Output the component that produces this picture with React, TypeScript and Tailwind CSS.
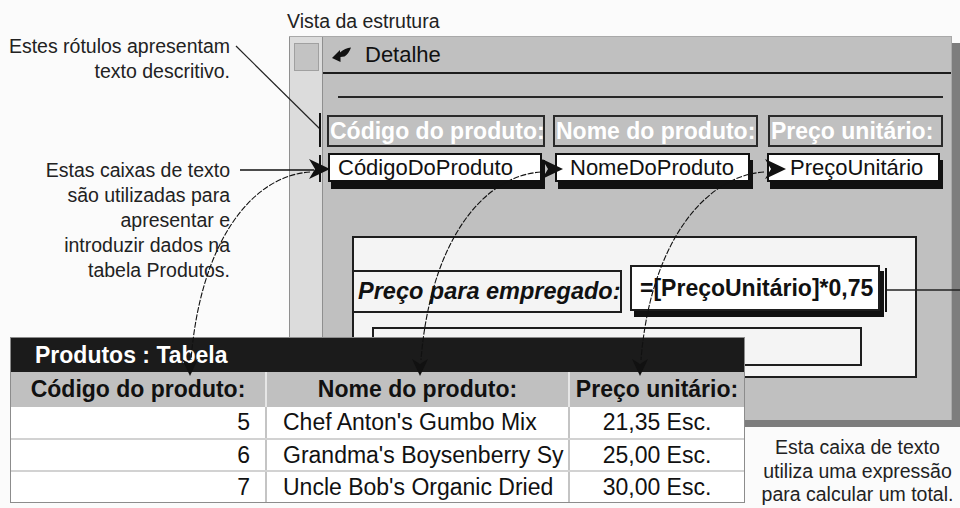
import React from "react";

function ArrowR({ x, y }: { x: number; y: number }) {
  return (
    <polygon
      points={`${x},${y} ${x - 21},${y - 10} ${x - 15},${y} ${x - 21},${y + 10}`}
      fill="#111"
    />
  );
}

function ArrowD({ x, y }: { x: number; y: number }) {
  return (
    <polygon
      points={`${x},${y} ${x - 8},${y - 17} ${x},${y - 12} ${x + 8},${y - 17}`}
      fill="#111"
    />
  );
}

const rows: [string, string, string][] = [
  ["5", "Chef Anton's Gumbo Mix", "21,35 Esc."],
  ["6", "Grandma's Boysenberry Sy", "25,00 Esc."],
  ["7", "Uncle Bob's Organic Dried", "30,00 Esc."],
];

export default function App() {
  return (
    <div className="relative w-[960px] h-[508px] overflow-hidden bg-[#fbfbfb] text-[#1a1a1a] font-['Liberation_Sans',Arial,sans-serif]">
      {/* caption */}
      <div className="ml-[287px] pt-[9px] h-[36px] text-[19.5px] leading-[25px] text-[#222]">
        Vista da estrutura
      </div>

      {/* design window */}
      <div className="ml-[289px] w-[663px] h-[384px] flex border-t border-r border-[#a9a9a9] shadow-[8px_7px_0_#7d7d7d]">
        <div className="w-[34px] shrink-0 bg-[#dcdcdc] border-l border-r border-[#8f8f8f] pt-[6px] pl-[4px]">
          <div className="w-[25px] h-[28px] bg-[#c3c3c3] border border-[#a0a0a0]" />
        </div>
        <div className="flex-1 flex flex-col bg-[#c0c0c0]">
          <div className="h-[37px] shrink-0 border-b-2 border-[#1c1c1c] flex items-center pl-[9px] gap-[13px]">
            <svg width="20" height="16" viewBox="0 0 20 16">
              <path d="M0 11 L8 3 L8 5.5 Q13 1 19 0.5 Q17 6.5 12.5 9.5 L8.5 10 L8.5 15 Z" fill="#111" />
            </svg>
            <span className="text-[22px] leading-none text-[#111]">Detalhe</span>
          </div>
          <div className="flex-1 flex flex-col">
            <div className="ml-[15px] mt-[22px] w-[605px] h-[2px] bg-[#262626]" />
            <div className="mt-[17px] pl-[4px] flex text-white font-bold text-[23px] leading-none">
              <div className="w-[218px] h-[32px] border-2 border-[#2a2a2a] flex items-center pl-[1px] overflow-hidden whitespace-nowrap">
                Código do produto:
              </div>
              <div className="ml-[8px] w-[205px] h-[32px] border-2 border-[#2a2a2a] flex items-center pl-[1px] overflow-hidden whitespace-nowrap">
                Nome do produto:
              </div>
              <div className="ml-[10px] w-[175px] h-[32px] border-2 border-[#2a2a2a] flex items-center pl-[1px] overflow-hidden whitespace-nowrap">
                Preço unitário:
              </div>
            </div>
            <div className="mt-[6px] pl-[5px] flex text-[22px] leading-none text-[#111]">
              <div className="w-[214px] h-[29px] bg-white border-2 border-[#111] shadow-[3px_7px_0_#111] flex items-center pl-[8px] overflow-hidden whitespace-nowrap">
                CódigoDoProduto
              </div>
              <div className="ml-[13px] w-[195px] h-[29px] bg-white border-2 border-[#111] shadow-[3px_7px_0_#111] flex items-center pl-[13px] overflow-hidden whitespace-nowrap">
                NomeDoProduto
              </div>
              <div className="ml-[17px] w-[173px] h-[29px] bg-white border-2 border-[#111] shadow-[3px_7px_0_#111] flex items-center pl-[21px] overflow-hidden whitespace-nowrap">
                PreçoUnitário
              </div>
            </div>
            <div className="mt-[54px] ml-[29px] w-[565px] h-[142px] border-2 border-[#1e1e1e] bg-[#f4f4f4] flex flex-col">
              <div className="flex items-start">
                <div className="ml-[-2px] mt-[32px] w-[270px] h-[43px] border-2 border-[#1e1e1e] flex items-center pl-[4px] font-bold italic text-[23.5px] leading-none text-[#111] whitespace-nowrap overflow-hidden">
                  Preço para empregado:
                </div>
                <div className="ml-[8px] mt-[27px] w-[250px] h-[46px] bg-white border-2 border-[#1e1e1e] shadow-[4px_6px_0_#111] flex items-center pl-[8px] font-bold text-[23px] leading-none text-[#111] whitespace-nowrap overflow-hidden">
                  =[PreçoUnitário]*0,75
                </div>
              </div>
              <div className="mt-[14px] ml-[18px] w-[490px] h-[39px] border-2 border-[#1e1e1e]" />
            </div>
          </div>
        </div>
      </div>

      {/* left callouts */}
      <div className="absolute left-0 top-[34px] w-[230px] text-right text-[19.5px] leading-[25px] text-[#222] whitespace-nowrap">
        <div>Estes rótulos apresentam</div>
        <div>texto descritivo.</div>
      </div>
      <div className="absolute left-0 top-[158px] w-[230px] text-right text-[19.5px] leading-[25px] text-[#222] whitespace-nowrap">
        <div>Estas caixas de texto</div>
        <div>são utilizadas para</div>
        <div>apresentar e</div>
        <div>introduzir dados na</div>
        <div>tabela Produtos.</div>
      </div>

      {/* bottom-right callout */}
      <div className="absolute left-[755px] top-[436px] w-[205px] text-center text-[19.5px] leading-[23.5px] text-[#222] whitespace-nowrap">
        <div>Esta caixa de texto</div>
        <div>utiliza uma expressão</div>
        <div>para calcular um total.</div>
      </div>

      {/* table window */}
      <div className="absolute left-[10px] top-[337px] w-[735px] border border-[#8c8c8c] bg-white flex flex-col text-[#111]">
        <div className="h-[34px] bg-[#1b1b1b] text-white font-bold text-[23px] leading-none pl-[24px] flex items-center">
          Produtos : Tabela
        </div>
        <div className="h-[35px] bg-[#c0c0c0] grid grid-cols-[256px_303px_1fr] font-bold text-[23px] leading-none">
          <div className="flex items-center justify-center border-r-2 border-[#e6e6e6] whitespace-nowrap">Código do produto:</div>
          <div className="flex items-center justify-center border-r-2 border-[#e6e6e6] whitespace-nowrap">Nome do produto:</div>
          <div className="flex items-center justify-center whitespace-nowrap">Preço unitário:</div>
        </div>
        {rows.map((r, i) => (
          <div
            key={r[0]}
            className={`grid grid-cols-[256px_303px_1fr] text-[23px] leading-none ${i === 0 ? "h-[31px]" : "h-[32px] border-t-2 border-[#d2d2d2]"}`}
          >
            <div className="flex items-center justify-end pr-[15px] border-r-2 border-[#c4c4c4]">{r[0]}</div>
            <div className="flex items-center pl-[16px] border-r-2 border-[#c4c4c4] whitespace-nowrap overflow-hidden">{r[1]}</div>
            <div className="flex items-center justify-center whitespace-nowrap">{r[2]}</div>
          </div>
        ))}
      </div>

      {/* connectors */}
      <svg className="absolute inset-0 pointer-events-none" width="960" height="508" viewBox="0 0 960 508">
        <line x1="236" y1="46" x2="320" y2="129" stroke="#222" strokeWidth="1.2" />
        <rect x="319" y="113" width="2" height="34" fill="#111" />
        <rect x="319" y="155" width="2" height="27" fill="#111" />
        <line x1="240" y1="170" x2="314" y2="170" stroke="#111" strokeWidth="1.6" />
        <g fill="none" stroke="#111" strokeWidth="1.1" strokeDasharray="6 1.5">
          <path d="M310 172 C250 176, 200 245, 191 360" />
          <path d="M541 172 C481 176, 430 245, 421 360" />
          <path d="M764 172 C704 176, 650 245, 641 360" />
        </g>
        <ArrowR x={330} y={169} />
        <ArrowR x={563} y={169} />
        <ArrowR x={786} y={169} />
        <ArrowD x={190} y={376} />
        <ArrowD x={420} y={376} />
        <ArrowD x={640} y={376} />
        <rect x="885" y="268" width="2" height="44" fill="#111" />
        <line x1="887" y1="290" x2="960" y2="290" stroke="#222" strokeWidth="1.5" />
      </svg>
    </div>
  );
}
